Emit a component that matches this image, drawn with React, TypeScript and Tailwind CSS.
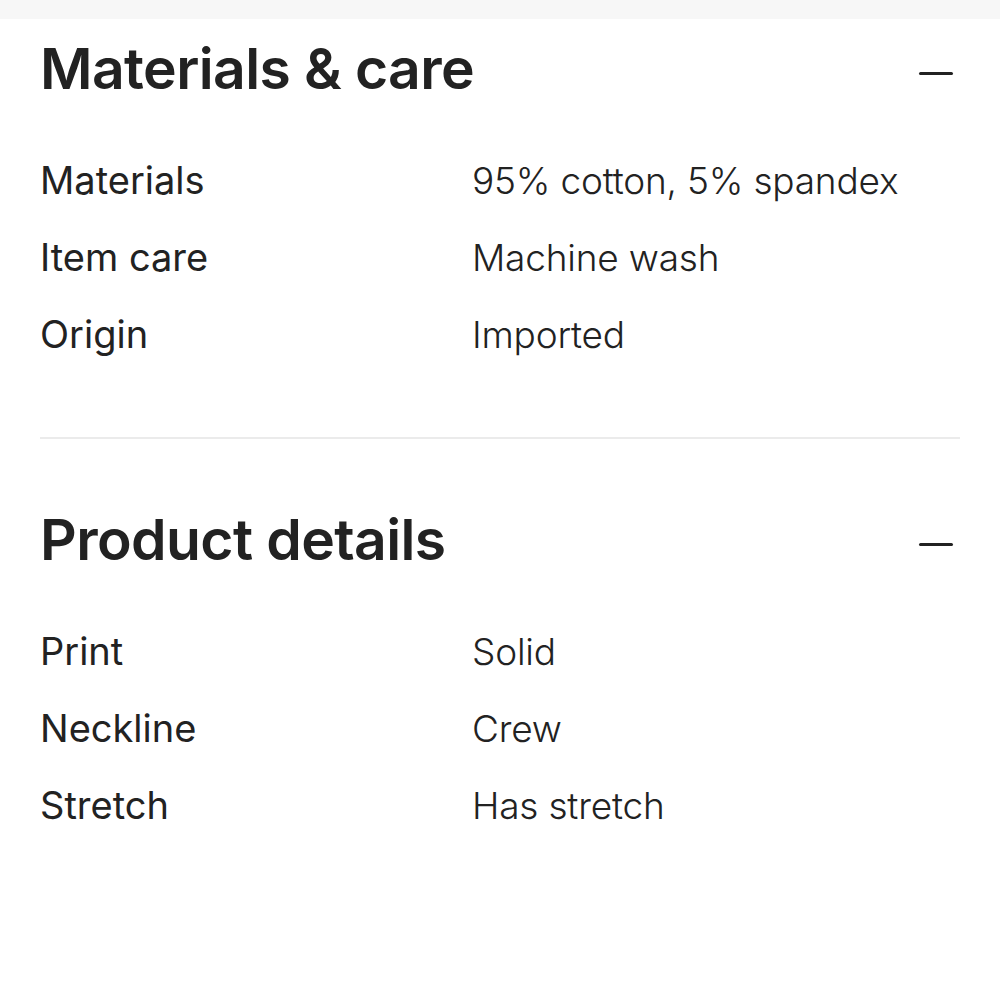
import React from "react";

const sections = [
  {
    title: "Materials & care",
    rows: [
      ["Materials", "95% cotton, 5% spandex"],
      ["Item care", "Machine wash"],
      ["Origin", "Imported"],
    ],
  },
  {
    title: "Product details",
    rows: [
      ["Print", "Solid"],
      ["Neckline", "Crew"],
      ["Stretch", "Has stretch"],
    ],
  },
];

function Section({ title, rows }: { title: string; rows: string[][] }) {
  return (
    <section>
      <div className="flex items-center justify-between">
        <h2 className="text-[57px] leading-[72px] font-semibold tracking-[-0.6px] text-[#222222]">{title}</h2>
        <span className="mt-2 mr-[7px] block h-[3px] w-[34px] rounded-sm bg-[#222222]" />
      </div>
      <dl className="mt-[37px]">
        {rows.map(([label, value]) => (
          <div key={label} className="grid grid-cols-[432px_1fr] text-[38px] leading-[77px] text-[#222222]">
            <dt className="font-normal">{label}</dt>
            <dd className="text-[37px] font-light tracking-[-0.2px]">{value}</dd>
          </div>
        ))}
      </dl>
    </section>
  );
}

export default function App() {
  return (
    <div className="min-h-[999px] bg-white font-['Inter',sans-serif]">
      <div className="h-[19px] bg-[#f7f7f7]" />
      <div className="px-10 pt-[14px]">
        <Section {...sections[0]} />
        <div className="mt-[64px] mb-[65px] h-[2px] bg-[#ebebeb]" />
        <Section {...sections[1]} />
      </div>
    </div>
  );
}
